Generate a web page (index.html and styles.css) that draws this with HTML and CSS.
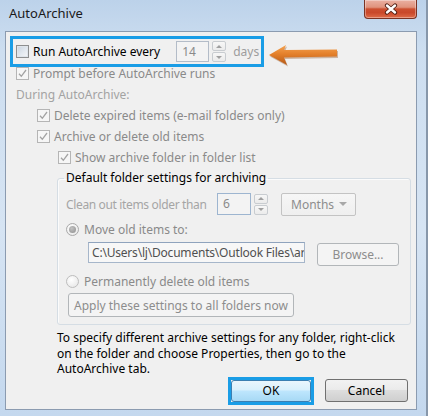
FILE: index.html
```html
<!DOCTYPE html>
<html>
<head>
<meta charset="utf-8">
<link rel="stylesheet" href="styles.css">
</head>
<body>
<div class="window">
  <div class="titlebar">
    <span class="title">AutoArchive</span>
    <div class="close">
      <svg width="14" height="12" viewBox="0 0 14 12">
        <path d="M3 2.5 L11 9.5 M11 2.5 L3 9.5" stroke="#4f1d12" stroke-width="4.2" stroke-linecap="round" fill="none"/>
        <path d="M3 2.5 L11 9.5 M11 2.5 L3 9.5" stroke="#ffffff" stroke-width="2.4" stroke-linecap="round" fill="none"/>
      </svg>
    </div>
  </div>
  <div class="client">
    <div class="hl-row">
      <span class="cb"></span>
      <span class="lbl on">Run AutoArchive every</span>
      <span class="spin first">
        <span class="spin-input">14</span>
        <span class="spinner"><span class="sp up"></span><span class="sp dn"></span></span>
      </span>
      <span class="days">days</span>
    </div>
    <div class="row ind1">
      <span class="cb dis"><svg width="11" height="11" viewBox="0 0 11 11"><path d="M2 5.8 L4.3 8.3 L9 2" stroke="#a3a3a3" stroke-width="1.3" fill="none"/></svg></span>
      <span class="lbl">Prompt before AutoArchive runs</span>
    </div>
    <div class="row ind1">
      <span class="light">During AutoArchive:</span>
    </div>
    <div class="row ind2">
      <span class="cb dis"><svg width="11" height="11" viewBox="0 0 11 11"><path d="M2 5.8 L4.3 8.3 L9 2" stroke="#a3a3a3" stroke-width="1.3" fill="none"/></svg></span>
      <span class="lbl">Delete expired items (e-mail folders only)</span>
    </div>
    <div class="row ind2">
      <span class="cb dis"><svg width="11" height="11" viewBox="0 0 11 11"><path d="M2 5.8 L4.3 8.3 L9 2" stroke="#a3a3a3" stroke-width="1.3" fill="none"/></svg></span>
      <span class="lbl">Archive or delete old items</span>
    </div>
    <div class="row ind3">
      <span class="cb dis"><svg width="11" height="11" viewBox="0 0 11 11"><path d="M2 5.8 L4.3 8.3 L9 2" stroke="#a3a3a3" stroke-width="1.3" fill="none"/></svg></span>
      <span class="lbl">Show archive folder in folder list</span>
    </div>
    <fieldset class="group">
      <legend>Default folder settings for archiving</legend>
      <div class="g-clean">
        <span class="clean-lbl">Clean out items older than</span>
        <span class="spin">
          <span class="spin-input blue">6</span>
          <span class="spinner"><span class="sp up"></span><span class="sp dn"></span></span>
        </span>
        <span class="combo">Months<span class="caret"></span></span>
      </div>
      <div class="g-radio g-move">
        <span class="radio on"><span class="dot"></span></span>
        <span class="rlbl">Move old items to:</span>
      </div>
      <div class="g-path">
        <span class="path">C:\Users\lj\Documents\Outlook Files\ar</span>
        <span class="btn dis browse">Browse...</span>
      </div>
      <div class="g-radio g-perm">
        <span class="radio"></span>
        <span class="rlbl">Permanently delete old items</span>
      </div>
      <span class="btn dis apply">Apply these settings to all folders now</span>
    </fieldset>
    <p class="note">To specify different archive settings for any folder, right-click<br>on the folder and choose Properties, then go to the<br>AutoArchive tab.</p>
    <div class="buttons">
      <div class="ok-focus"><span class="btn default">OK</span></div>
      <span class="btn cancel">Cancel</span>
    </div>
  </div>
  <svg class="arrow" width="74" height="26" viewBox="0 0 74 26">
    <defs>
      <linearGradient id="ag" x1="0" y1="0" x2="0" y2="1">
        <stop offset="0" stop-color="#f5a453"/>
        <stop offset="0.45" stop-color="#e4802b"/>
        <stop offset="1" stop-color="#b65a18"/>
      </linearGradient>
    </defs>
    <polygon points="4,14.5 21,4.5 19,9.5 72,9 72,16 19,17 22,24.5" fill="#8a4512" opacity="0.35"/>
    <polygon points="3,13 20,3 18,8 71,7.5 71,14.5 18,15.5 21,23" fill="url(#ag)"/>
  </svg>
</div>
</body>
</html>
```
FILE: styles.css
```css
* { box-sizing: border-box; }
html, body { margin: 0; padding: 0; }
body {
  width: 428px;
  height: 416px;
  overflow: hidden;
  font-family: "Noto Sans", "Open Sans", sans-serif;
  font-size: 12px;
  color: #000;
  background: #c9dbee;
}
.window {
  position: relative;
  width: 428px;
  height: 416px;
  padding: 0 9px 6px 5px;
  display: flex;
  flex-direction: column;
  background: linear-gradient(180deg, #bcd2ea 0%, #cddef0 12%, #d6e4f3 55%, #c4d8ee 100%);
  border-right: 2px solid #8797aa;
}
.titlebar {
  height: 31px;
  flex: none;
  display: flex;
  justify-content: space-between;
  align-items: flex-start;
  padding-left: 4px;
}
.title {
  margin-top: 5px;
  font-size: 13px;
  line-height: 16px;
  color: #1a1a1a;
}
.close {
  width: 53px;
  height: 19px;
  border: 1px solid #7a3324;
  border-top: none;
  border-radius: 0 0 4px 4px;
  background: linear-gradient(180deg, #eab0a2 0%, #e0937d 40%, #cc4f30 50%, #c9482a 70%, #df6c48 100%);
  box-shadow: inset 0 0 0 1px rgba(255,255,255,0.35);
  display: flex;
  align-items: center;
  justify-content: center;
}
.close svg { display: block; }
.client {
  flex: 1;
  background: #f0f0f0;
  border: 1px solid #8b9bb0;
  display: flex;
  flex-direction: column;
}
.hl-row {
  display: flex;
  align-items: center;
  width: 254px;
  height: 31px;
  margin: 4px 0 -4px 4px;
  border: 3px solid #1a9de6;
  padding-left: 3px;
  position: relative;
}
.cb {
  width: 13px;
  height: 13px;
  flex: none;
  border: 1px solid #8e8f8f;
  background: linear-gradient(135deg, #c8d3df 0%, #e3e9ef 55%, #f6f7f8 100%);
  box-shadow: inset 0 0 0 1px #dfe5eb;
  display: flex;
  align-items: center;
  justify-content: center;
}
.cb.dis {
  border-color: #b5b5b5;
  background: #f6f6f6;
  box-shadow: none;
}
.cb svg { display: block; }
.lbl {
  margin-left: 4px;
  color: #8a8a8a;
  white-space: nowrap;
}
.lbl.on { color: #000; }
.light { color: #a3a3a3; }
.spin { display: flex; align-items: center; flex: none; }
.spin.first { margin-left: 16px; }
.spin-input {
  width: 33px;
  height: 21px;
  border: 1px solid #b3bcc8;
  background: #f3f3f3;
  color: #8a8a8a;
  padding-left: 5px;
  line-height: 19px;
}
.spin-input.blue {
  width: 34px;
  height: 22px;
  border-color: #9db5d0;
  line-height: 20px;
}
.spinner {
  margin-left: 3px;
  width: 14px;
  height: 21px;
  display: flex;
  flex-direction: column;
  gap: 1px;
}
.sp {
  flex: 1;
  border: 1px solid #c8ccd0;
  border-radius: 2px;
  background: linear-gradient(180deg, #f7f7f7, #ebebeb);
  display: flex;
  align-items: center;
  justify-content: center;
}
.sp::after {
  content: "";
  width: 0;
  height: 0;
  border-left: 3px solid transparent;
  border-right: 3px solid transparent;
}
.sp.up::after { border-bottom: 3px solid #9f9f9f; }
.sp.dn::after { border-top: 3px solid #9f9f9f; }
.days { margin-left: 7px; color: #9d9d9d; }
.row {
  height: 21px;
  flex: none;
  display: flex;
  align-items: center;
}
.ind1 { padding-left: 10px; }
.ind2 { padding-left: 31px; }
.ind3 { padding-left: 52px; }
.group {
  margin: 2px 0 0 51px;
  width: 354px;
  min-width: 0;
  border: 1px solid #d5dde4;
  border-radius: 3px;
  padding: 6px 0 7px 8px;
  box-shadow: inset 1px 1px 0 #fbfbfb;
}
.group legend {
  padding: 0 2px;
  margin-left: -2px;
  line-height: 16px;
  color: #000;
}
.g-clean {
  height: 24px;
  display: flex;
  align-items: center;
}
.clean-lbl {
  width: 151px;
  color: #a5a5a5;
  white-space: nowrap;
  letter-spacing: -0.35px;
}
.combo {
  margin-left: 13px;
  width: 75px;
  height: 23px;
  border: 1px solid #c3c3c3;
  border-radius: 2px;
  background: linear-gradient(180deg, #f6f6f6, #efefef);
  color: #8d8d8d;
  padding-left: 9px;
  display: flex;
  align-items: center;
  justify-content: space-between;
  padding-right: 8px;
}
.caret {
  width: 0;
  height: 0;
  border-left: 4px solid transparent;
  border-right: 4px solid transparent;
  border-top: 4px solid #a8a8a8;
}
.g-radio {
  height: 18px;
  display: flex;
  align-items: center;
}
.g-move { margin-top: 4px; }
.g-perm { margin-top: 6px; }
.radio {
  width: 13px;
  height: 13px;
  flex: none;
  border: 1px solid #bdbdbd;
  border-radius: 50%;
  background: radial-gradient(circle at 40% 35%, #ffffff, #e4e4e4);
  display: flex;
  align-items: center;
  justify-content: center;
}
.radio.on { border-color: #a9a9a9; }
.dot {
  width: 7px;
  height: 7px;
  border-radius: 50%;
  background: radial-gradient(circle at 40% 35%, #c2c2c2, #8e8e8e);
}
.rlbl { margin-left: 5px; color: #8a8a8a; }
.g-path {
  margin-top: 4px;
  height: 24px;
  display: flex;
  align-items: flex-start;
  padding-left: 22px;
}
.path {
  width: 217px;
  height: 21px;
  border: 1px solid #a6b6ca;
  border-top-color: #8fa3bd;
  background: #f7f7f7;
  color: #505050;
  padding-left: 3px;
  line-height: 19px;
  white-space: nowrap;
  overflow: hidden;
  letter-spacing: -0.2px;
}
.btn {
  display: flex;
  align-items: center;
  justify-content: center;
  border-radius: 3px;
  white-space: nowrap;
  flex: none;
}
.btn.dis {
  border: 1px solid #b2b6b9;
  background: #f4f4f4;
  color: #8d8d8d;
}
.browse {
  margin-left: 12px;
  margin-top: 1px;
  width: 82px;
  height: 23px;
}
.apply {
  margin-top: 3px;
  margin-left: 2px;
  width: 226px;
  height: 24px;
}
.note {
  margin: 5px 0 0 51px;
  line-height: 15.5px;
  white-space: nowrap;
}
.buttons {
  display: flex;
  justify-content: flex-end;
  align-items: center;
  gap: 11px;
  padding-right: 8px;
  height: 28px;
  flex: none;
}
.ok-focus {
  width: 86px;
  height: 28px;
  border: 3px solid #1a9de6;
  display: flex;
}
.btn.default {
  flex: 1;
  border: 1px solid #3c7fb1;
  background: linear-gradient(180deg, #eaf6fd 0%, #d9f0fc 45%, #bee6fd 50%, #a7d9f5 100%);
  color: #000;
}
.cancel {
  width: 83px;
  height: 23px;
  border: 1px solid #707070;
  background: linear-gradient(180deg, #f2f2f2 0%, #ebebeb 45%, #dddddd 50%, #cfcfcf 100%);
  color: #000;
}
.arrow {
  position: absolute;
  left: 266px;
  top: 42px;
}
```
